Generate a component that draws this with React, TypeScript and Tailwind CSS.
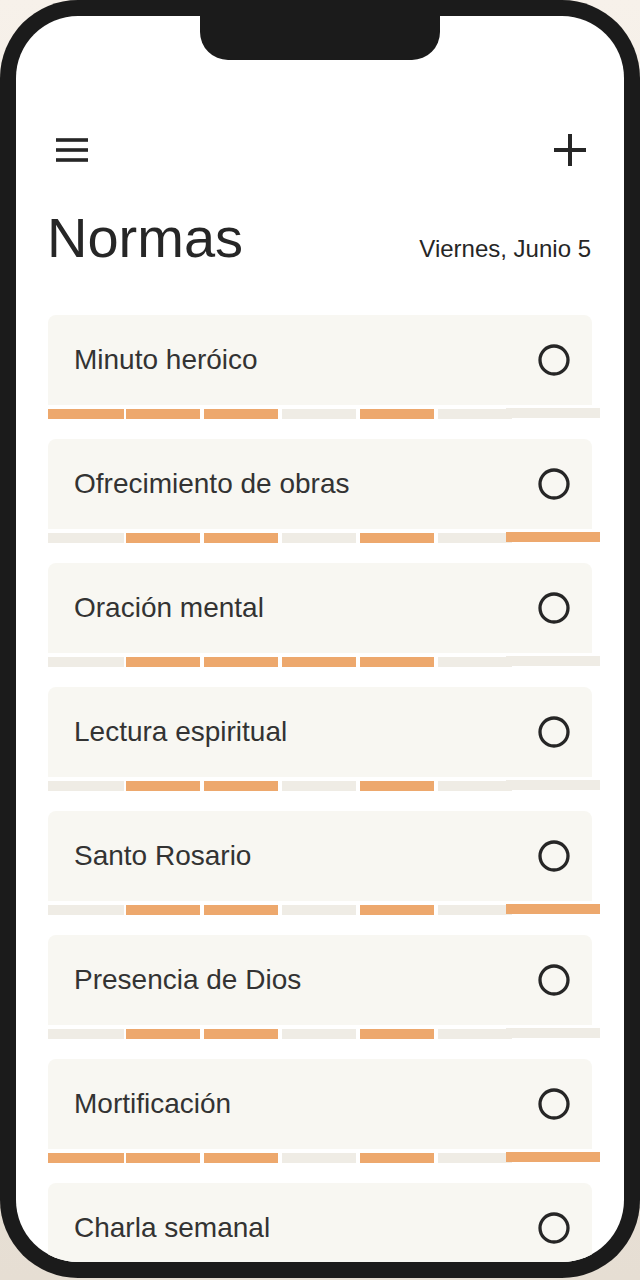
import React from "react";

type Row = { name: string; bars: number[] };

const rows: Row[] = [
  { name: "Minuto heróico", bars: [1, 1, 1, 0, 1, 0, 0] },
  { name: "Ofrecimiento de obras", bars: [0, 1, 1, 0, 1, 0, 1] },
  { name: "Oración mental", bars: [0, 1, 1, 1, 1, 0, 0] },
  { name: "Lectura espiritual", bars: [0, 1, 1, 0, 1, 0, 0] },
  { name: "Santo Rosario", bars: [0, 1, 1, 0, 1, 0, 1] },
  { name: "Presencia de Dios", bars: [0, 1, 1, 0, 1, 0, 0] },
  { name: "Mortificación", bars: [1, 1, 1, 0, 1, 0, 1] },
  { name: "Charla semanal", bars: [0, 1, 1, 0, 1, 0, 0] },
];

function Seg({ on, className }: { on: number; className: string }) {
  return <div className={`${className} ${on ? "bg-[#eda86d]" : "bg-[#efece5]"}`} />;
}

function Card({ row }: { row: Row }) {
  return (
    <div className="mb-[20px]">
      <div className="h-[90px] rounded-t-[8px] bg-[#f8f7f2] flex items-center justify-between pl-[26px] pr-[22px]">
        <span className="text-[28px] leading-none text-[#333333]">{row.name}</span>
        <svg width="32" height="32" viewBox="0 0 32 32" className="block">
          <circle cx="16" cy="16" r="14" fill="none" stroke="#262626" strokeWidth="3.3" />
        </svg>
      </div>
      <div className="mt-[4px] flex h-[10px] items-start">
        <Seg on={row.bars[0]} className="h-[10px] w-[76px] shrink-0" />
        <Seg on={row.bars[1]} className="h-[10px] w-[74px] ml-[2px] shrink-0" />
        <Seg on={row.bars[2]} className="h-[10px] w-[74px] ml-[4px] shrink-0" />
        <Seg on={row.bars[3]} className="h-[10px] w-[74px] ml-[4px] shrink-0" />
        <Seg on={row.bars[4]} className="h-[10px] w-[74px] ml-[4px] shrink-0" />
        <Seg on={row.bars[5]} className="h-[10px] w-[74px] ml-[4px] shrink-0" />
        <Seg on={row.bars[6]} className="relative h-[10px] w-[94px] ml-[-6px] -mt-px shrink-0" />
      </div>
    </div>
  );
}

export default function App() {
  return (
    <div className="w-[640px] h-[1280px] bg-gradient-to-b from-[#f7f1ea] to-[#e6ded3] font-['Liberation_Sans',Arial,sans-serif]">
      <div className="h-[1278px] rounded-[78px] bg-[#1b1b1b] p-4">
        <div className="relative h-full overflow-hidden rounded-[62px] bg-white">
          <div className="absolute left-[184px] top-0 z-10 h-[44px] w-[240px] rounded-b-[28px] bg-[#1b1b1b]" />
          <div className="px-8 pt-[110px]">
            <div className="flex h-[48px] items-center justify-between">
              <svg width="32" height="24" viewBox="0 0 32 24" className="ml-[8px] block">
                <rect x="0" y="0.2" width="32" height="3.6" fill="#262626" />
                <rect x="0" y="10.2" width="32" height="3.6" fill="#262626" />
                <rect x="0" y="20.2" width="32" height="3.6" fill="#262626" />
              </svg>
              <svg width="32" height="32" viewBox="0 0 32 32" className="mr-[6px] block">
                <rect x="14" y="0" width="4" height="32" fill="#262626" />
                <rect x="0" y="14" width="32" height="4" fill="#262626" />
              </svg>
            </div>
            <div className="mt-[36px] flex items-baseline justify-between">
              <h1 className="text-[56px] leading-none text-[#262626] ml-[-1px]">Normas</h1>
              <span className="text-[24px] leading-none text-[#262626] mr-[1px]">Viernes, Junio 5</span>
            </div>
            <div className="mt-[49px]">
              {rows.map((r) => (
                <Card key={r.name} row={r} />
              ))}
            </div>
          </div>
        </div>
      </div>
    </div>
  );
}
